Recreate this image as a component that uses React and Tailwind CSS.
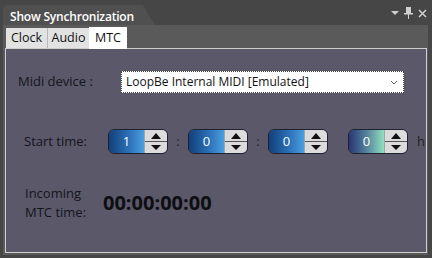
import React from "react";

function Spin({ value, grad }) {
  return (
    <div className="flex h-[25px] w-[60px] rounded-[6px] border border-[#1c2230] overflow-hidden shadow-[inset_0_0_0_1px_rgba(255,255,255,0.15)]">
      <div className={`flex-1 flex items-center justify-center text-white text-[13px] ${grad}`}>{value}</div>
      <div className="w-[23px] flex flex-col bg-[#dcdcdc] border-l border-[#9aa]">
        <div className="flex-1 flex items-center justify-center border-b border-[#555]">
          <svg width="10" height="6" viewBox="0 0 10 6"><path d="M5 0 L10 6 L0 6 Z" fill="#111" /></svg>
        </div>
        <div className="flex-1 flex items-center justify-center">
          <svg width="10" height="5" viewBox="0 0 10 5"><path d="M0 0 L10 0 L5 5 Z" fill="#111" /></svg>
        </div>
      </div>
    </div>
  );
}

export default function App() {
  const font = { fontFamily: '"Open Sans", "Noto Sans", sans-serif' };
  return (
    <div className="w-[432px] h-[258px] bg-[#464646] overflow-hidden flex flex-col" style={font}>
      <div className="h-[25px] flex items-end px-[3px] relative">
        <div className="h-[20px] w-[152px] bg-[#505050] rounded-tl-[5px] [clip-path:polygon(0_0,92%_0,100%_100%,0_100%)] flex items-center pl-[7px] pt-[3px] text-white text-[12px] font-semibold tracking-[-0.2px]">
          Show Synchronization
        </div>
        <div className="absolute right-[5px] top-[7px] flex items-center gap-[5px] text-[#d0d0d0]">
          <svg width="8" height="6" viewBox="0 0 8 6"><path d="M0 1 L8 1 L4 5 Z" fill="#d0d0d0" /></svg>
          <svg width="9" height="12" viewBox="0 0 9 12"><rect x="2" y="0" width="5" height="6" fill="#d0d0d0" /><rect x="0" y="6" width="9" height="1.5" fill="#d0d0d0" /><rect x="4" y="7" width="1" height="5" fill="#d0d0d0" /></svg>
          <svg width="9" height="9" viewBox="0 0 9 9"><path d="M1 1 L8 8 M8 1 L1 8" stroke="#d0d0d0" strokeWidth="1.5" /></svg>
        </div>
      </div>
      <div className="ml-[3px] w-[425px] h-[230px] bg-[#5a5a5a] flex flex-col pl-[2px] pr-[1px]">
        <div className="h-[23px] flex items-end pl-[1px] relative z-10">
          <div className="h-[20px] w-[42px] bg-[#e2e2e2] border-r border-[#b8b8b8] flex items-center justify-center text-[12.5px] text-[#111]">Clock</div>
          <div className="h-[20px] w-[41px] bg-[#e2e2e2] flex items-center justify-center text-[12.5px] text-[#111]">Audio</div>
          <div className="h-[22px] w-[38px] bg-white mb-[-1px] flex items-center justify-center text-[12.5px] text-[#111]">MTC</div>
        </div>
        <div className="h-[205px] border border-[#cfcfcf] bg-[#5a5869] flex flex-col text-[#15151c]">
          <div className="flex items-center h-[22px] mt-[22px]">
            <span className="ml-[12px] w-[103px] text-[13px]">Midi device :</span>
            <div className="w-[283px] h-[22px] bg-white border border-dotted border-[#444] flex items-center px-[4px] text-[12px] text-[#111]">
              <span className="flex-1">LoopBe Internal MIDI [Emulated]</span>
              <svg width="8" height="5" viewBox="0 0 8 5" className="mr-[1px]"><path d="M1 1 L4 4 L7 1" stroke="#666" strokeWidth="1" fill="none" /></svg>
            </div>
          </div>
          <div className="flex items-center h-[25px] mt-[36px]">
            <span className="ml-[18px] w-[84px] text-[13px]">Start time:</span>
            <Spin value="1" grad="bg-[linear-gradient(90deg,#13407a,#2a6fb5_55%,#4a9ee0)]" />
            <span className="w-[20px] text-center text-[13px] text-[#222]">:</span>
            <Spin value="0" grad="bg-[linear-gradient(90deg,#13407a,#2a6fb5_55%,#4a9ee0)]" />
            <span className="w-[20px] text-center text-[13px] text-[#222]">:</span>
            <Spin value="0" grad="bg-[linear-gradient(90deg,#13407a,#2a6fb5_55%,#4a9ee0)]" />
            <span className="w-[20px]"></span>
            <Spin value="0" grad="bg-[linear-gradient(90deg,#2a3575,#4f7a98_45%,#90e0c0)]" />
            <span className="ml-[9px] text-[13px] text-[#222]">h</span>
          </div>
          <div className="flex items-center mt-[30px]">
            <span className="ml-[19px] w-[78px] text-[13px] leading-[19px]">Incoming<br />MTC time:</span>
            <span className="text-[20px] font-bold text-[#0e0e12]">00:00:00:00</span>
          </div>
        </div>
      </div>
    </div>
  );
}
